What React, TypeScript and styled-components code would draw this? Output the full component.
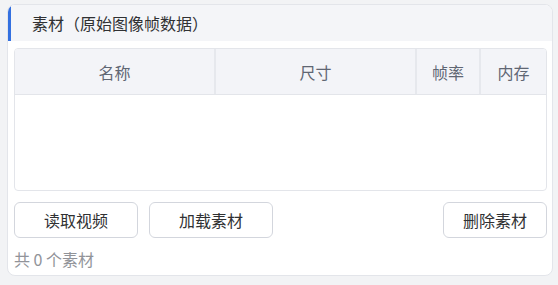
import styled, { createGlobalStyle } from 'styled-components'

const GlobalStyle = createGlobalStyle`
    body {
        margin: 0;
        background: #f2f3f5;
        font-family: "Noto Sans CJK SC", "Noto Sans", sans-serif;
    }
`

const Page = styled.div`
    padding: 4px 5px 0 7px;
`

const Card = styled.div`
    width: 546px;
    height: 272px;
    box-sizing: border-box;
    background: #fff;
    border: 1px solid #e3e5ea;
    border-radius: 8px;
    overflow: hidden;
    display: flex;
    flex-direction: column;
`

const CardHeader = styled.div`
    height: 36px;
    background: #f4f5f8;
    border-left: 3px solid #3370e0;
    display: flex;
    align-items: center;
    padding-left: 21px;
    font-size: 16px;
    color: #303133;
`

const CardBody = styled.div`
    padding: 7px 5px 0 6px;
    display: flex;
    flex-direction: column;
`

const Table = styled.div`
    height: 143px;
    box-sizing: border-box;
    border: 1px solid #e3e5ea;
    border-radius: 4px;
    overflow: hidden;
`

const HeadRow = styled.div`
    display: grid;
    grid-template-columns: 201px 201px 64px 1fr;
    height: 45px;
    background: #f3f4f8;
    border-bottom: 1px solid #e3e5ea;
`

const HeadCell = styled.div<{ $last?: boolean }>`
    display: flex;
    align-items: center;
    justify-content: center;
    font-size: 16px;
    color: #5f6673;
    border-right: ${(p) => (p.$last ? 'none' : '2px solid #e6e8ed')};
`

const Actions = styled.div`
    display: flex;
    gap: 11px;
    margin-top: 11px;
`

const Button = styled.button<{ $width: number }>`
    width: ${(p) => p.$width}px;
    height: 36px;
    background: #fff;
    border: 1px solid #d3d6dd;
    border-radius: 6px;
    font-family: inherit;
    font-size: 16px;
    color: #303133;
    cursor: pointer;
`

const Spacer = styled.div`
    flex: 1;
`

const Footer = styled.div`
    margin-top: 10px;
    font-size: 16px;
    color: #919399;
    line-height: 22px;
`

export default function App() {
    const columns = ['名称', '尺寸', '帧率', '内存']

    return (
        <Page>
            <GlobalStyle />
            <Card>
                <CardHeader>素材（原始图像帧数据）</CardHeader>

                <CardBody>
                    <Table>
                        <HeadRow>
                            {columns.map((c, i) => (
                                <HeadCell key={c} $last={i === columns.length - 1}>{c}</HeadCell>
                            ))}
                        </HeadRow>
                    </Table>

                    <Actions>
                        <Button $width={124}>读取视频</Button>
                        <Button $width={124}>加载素材</Button>
                        <Spacer />
                        <Button $width={104}>删除素材</Button>
                    </Actions>

                    <Footer>共 0 个素材</Footer>
                </CardBody>
            </Card>
        </Page>
    )
}
